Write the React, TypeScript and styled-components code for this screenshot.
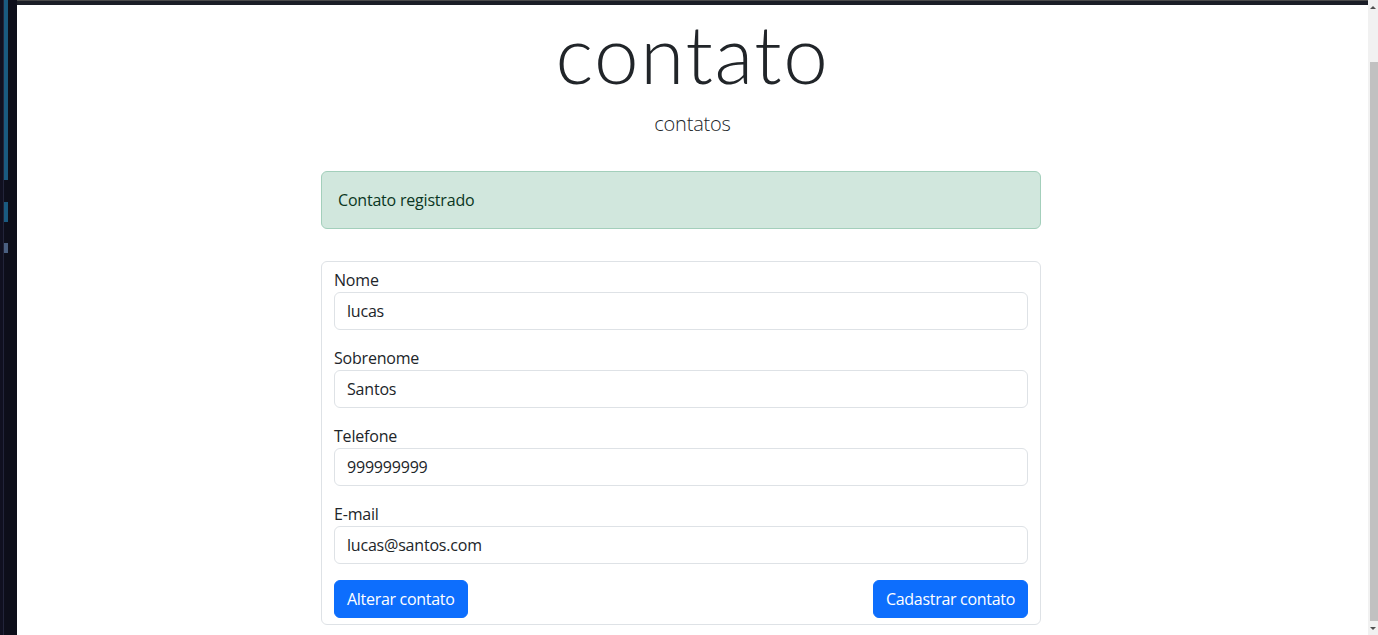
import React, { useState } from "react";
import styled, { createGlobalStyle } from "styled-components";

const GlobalStyle = createGlobalStyle`
  html, body {
    margin: 0;
    padding: 0;
    height: 100%;
    overflow: hidden;
    background: #ffffff;
  }
  body {
    font-family: "Open Sans", "Noto Sans", "Liberation Sans", sans-serif;
    color: #212529;
  }
  * { box-sizing: border-box; }
`;

const Frame = styled.div`
  display: flex;
  width: 100vw;
  height: 100vh;
  overflow: hidden;
`;

const SideStrip = styled.div`
  width: 17px;
  background: #0d0e1a;
  display: flex;
  border-left: 3px solid #101020;
`;

const SideRail = styled.div`
  width: 5px;
  display: flex;
  flex-direction: column;
  border-left: 1px solid #22243a;
`;

const RailMark = styled.div<{ $h: number; $color?: string }>`
  height: ${({ $h }) => $h}px;
  background: ${({ $color }) => $color || "transparent"};
`;

const Main = styled.div`
  flex: 1;
  display: flex;
  flex-direction: column;
  min-width: 0;
`;

const TopBar = styled.div`
  height: 5px;
  background: #1b1e27;
  border-top: 1px solid #4a4a4a;
`;

const Page = styled.div`
  flex: 1;
  background: #ffffff;
  display: flex;
  flex-direction: column;
  align-items: center;
  overflow: hidden;
`;

const Title = styled.h1`
  margin: 0 0 8px;
  font-family: Lato, "Open Sans", sans-serif;
  font-size: 80px;
  font-weight: 300;
  line-height: 96px;
  letter-spacing: 1.6px;
  text-align: center;
`;

const Lead = styled.p`
  margin: 0 0 32px;
  font-size: 20px;
  font-weight: 300;
  line-height: 30px;
  letter-spacing: -0.2px;
  text-align: center;
`;

const Section = styled.div`
  width: 720px;
  margin-right: 23px;
  display: flex;
  flex-direction: column;
  gap: 32px;
`;

const Alert = styled.div`
  padding: 16px;
  border: 1px solid #a3cfbb;
  border-radius: 6px;
  background: #d1e7dd;
  color: #0a3622;
  font-size: 16px;
  line-height: 24px;
  letter-spacing: -0.2px;
`;

const Form = styled.form`
  border: 1px solid #dee2e6;
  border-radius: 6px;
  padding: 6px 12px 6px;
  display: flex;
  flex-direction: column;
  gap: 16px;
`;

const Field = styled.div`
  display: flex;
  flex-direction: column;
`;

const Label = styled.label`
  font-size: 16px;
  line-height: 24px;
  letter-spacing: -0.2px;
`;

const Input = styled.input`
  height: 38px;
  padding: 6px 12px;
  border: 1px solid #dee2e6;
  border-radius: 6px;
  font-family: inherit;
  font-size: 16px;
  letter-spacing: -0.2px;
  color: #212529;
  background: #fff;
  outline: none;
`;

const Actions = styled.div`
  display: flex;
  justify-content: space-between;
`;

const Button = styled.button`
  height: 38px;
  padding: 6px 12px;
  border: 1px solid #0d6efd;
  border-radius: 6px;
  background: #0d6efd;
  color: #fff;
  font-family: inherit;
  font-size: 16px;
  letter-spacing: -0.3px;
  line-height: 24px;
  cursor: pointer;
`;

const Scrollbar = styled.div`
  width: 10px;
  background: #f1f1f1;
  display: flex;
  flex-direction: column;
  align-items: center;
`;

const Arrow = styled.div<{ $down?: boolean }>`
  height: 14px;
  display: flex;
  align-items: center;
  justify-content: center;
  &::before {
    content: "";
    border-left: 3px solid transparent;
    border-right: 3px solid transparent;
    ${({ $down }) =>
      $down ? "border-top: 3px solid #505050;" : "border-bottom: 3px solid #505050;"}
  }
`;

const Track = styled.div`
  flex: 1;
  width: 100%;
  padding: 48px 0 0 2px;
  display: flex;
`;

const Thumb = styled.div`
  flex: 1;
  background: #c1c1c1;
`;

const fields = [
  { id: "nome", label: "Nome", value: "lucas" },
  { id: "sobrenome", label: "Sobrenome", value: "Santos" },
  { id: "telefone", label: "Telefone", value: "999999999" },
  { id: "email", label: "E-mail", value: "lucas@santos.com" },
];

export default function App() {
  const [values, setValues] = useState<Record<string, string>>(
    Object.fromEntries(fields.map((f) => [f.id, f.value]))
  );

  return (
    <>
      <GlobalStyle />
      <Frame>
        <SideStrip>
          <SideRail>
            <RailMark $h={180} $color="#1a5a80" />
            <RailMark $h={22} />
            <RailMark $h={20} $color="#1a5a80" />
            <RailMark $h={21} />
            <RailMark $h={10} $color="#4a5f80" />
          </SideRail>
        </SideStrip>
        <Main>
          <TopBar />
          <Page>
            <Title>contato</Title>
            <Lead>contatos</Lead>
            <Section>
              <Alert>Contato registrado</Alert>
              <Form onSubmit={(e) => e.preventDefault()}>
                {fields.map((f) => (
                  <Field key={f.id}>
                    <Label htmlFor={f.id}>{f.label}</Label>
                    <Input
                      id={f.id}
                      value={values[f.id]}
                      onChange={(e) =>
                        setValues({ ...values, [f.id]: e.target.value })
                      }
                    />
                  </Field>
                ))}
                <Actions>
                  <Button type="button">Alterar contato</Button>
                  <Button type="submit">Cadastrar contato</Button>
                </Actions>
              </Form>
            </Section>
          </Page>
        </Main>
        <Scrollbar>
          <Arrow />
          <Track>
            <Thumb />
          </Track>
          <Arrow $down />
        </Scrollbar>
      </Frame>
    </>
  );
}
